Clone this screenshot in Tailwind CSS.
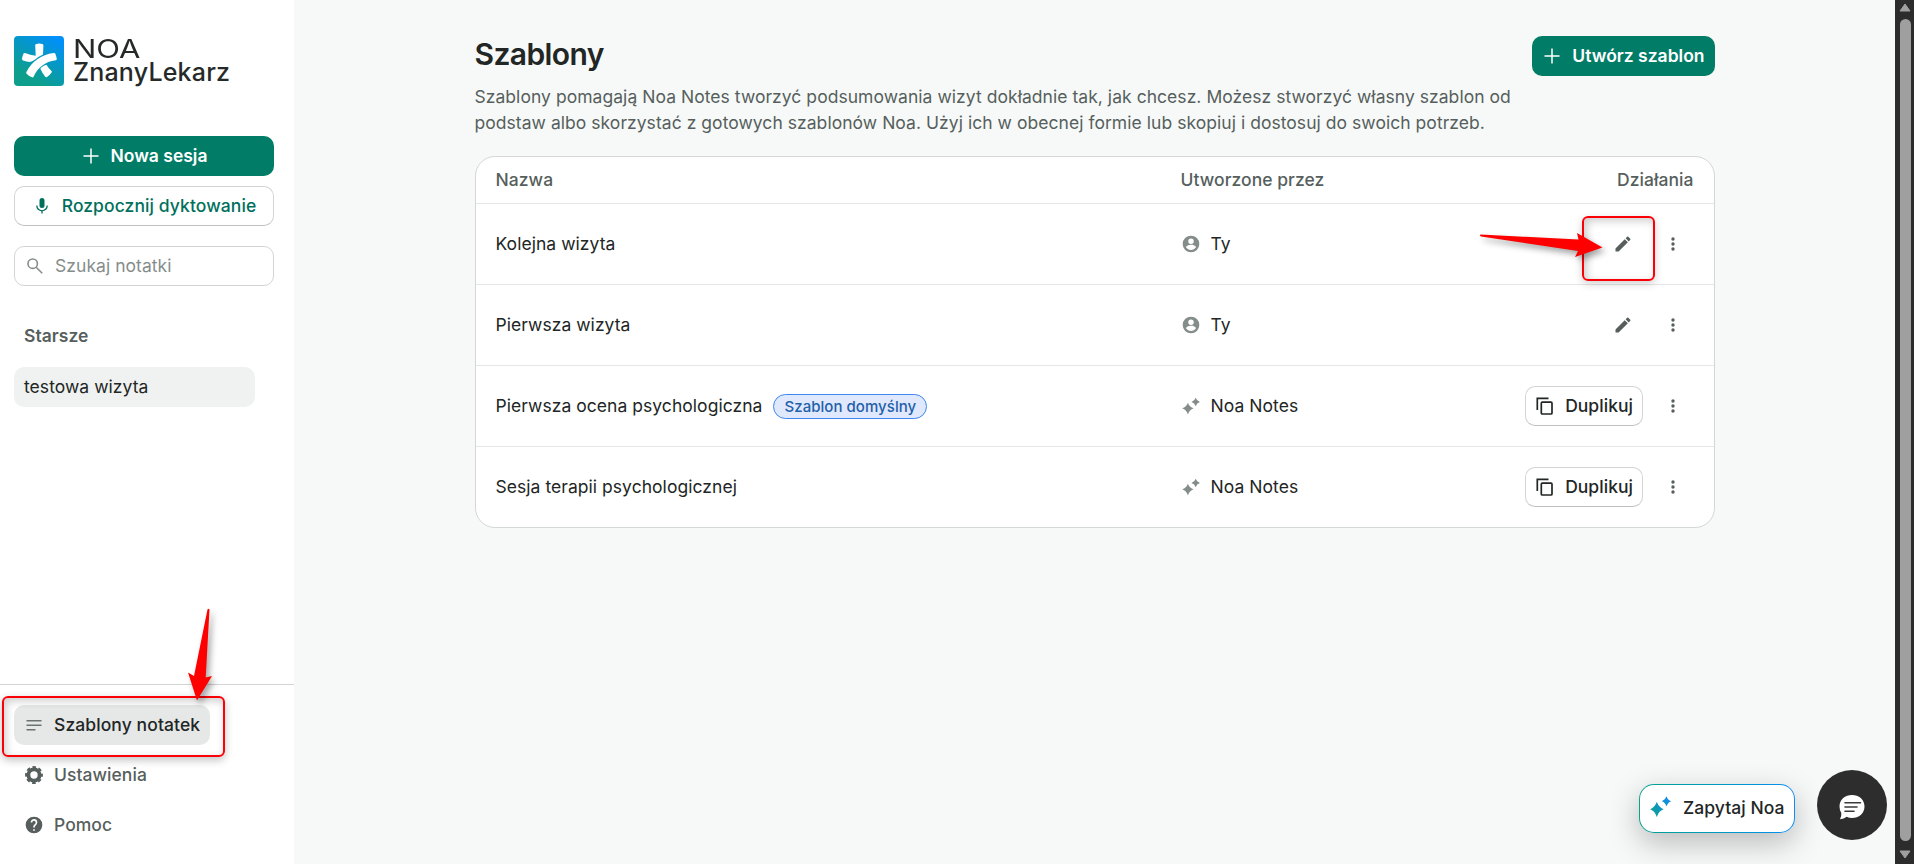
<!DOCTYPE html>
<html lang="pl">
<head>
    <meta charset="UTF-8">
    <title>Noa Notes - Szablony</title>
    <script src="https://cdn.jsdelivr.net/npm/@tailwindcss/browser@4"></script>
    <style>
        body {
            font-family: 'Inter', sans-serif;
        }
    </style>
</head>
<body class="relative flex h-screen overflow-hidden bg-[#f7f9f8] text-[17.5px] leading-[26px] tracking-[0.045px] text-[#222625]">
    <!-- icons -->
    <svg class="hidden">
        <symbol id="plus" viewBox="0 0 20 20"><path d="M10 2.5v15M2.500 10h15" stroke="currentColor" stroke-width="1.5" fill="none"/></symbol>
        <symbol id="user" viewBox="0 0 24 24"><path fill="currentColor" d="M12 2a10 10 0 1 0 0 20 10 10 0 0 0 0-20Zm0 3.4a3.3 3.3 0 1 1 0 6.6 3.3 3.3 0 0 1 0-6.6Zm0 13.8c-2.500 0-4.710-1.280-6-3.220.03-1.990 4-3.080 6-3.080 1.990 0 5.970 1.090 6 3.080-1.290 1.940-3.500 3.220-6 3.220Z"/></symbol>
        <symbol id="stars" viewBox="0 0 20 20"><path fill="currentColor" d="M6.900 6.700Q8.400 10.900 12.600 12.300Q8.400 13.700 6.900 18.400Q5.400 13.700 1.200 12.300Q5.400 10.900 6.900 6.700ZM14.700 1.700Q15.700 4.900 18.900 5.900Q15.700 6.900 14.700 10.200Q13.700 6.900 10.500 5.900Q13.700 4.900 14.700 1.700Z"/></symbol>
        <symbol id="pencil" viewBox="0 0 24 24"><path fill="currentColor" d="M3 17.250V21h3.750L17.810 9.940l-3.750-3.750L3 17.250ZM20.710 7.040a1 1 0 0 0 0-1.410l-2.340-2.340a1 1 0 0 0-1.410 0l-1.830 1.830 3.750 3.750 1.830-1.830Z"/></symbol>
        <symbol id="dots" viewBox="0 0 20 20"><g fill="currentColor"><circle cx="10" cy="5" r="1.700"/><circle cx="10" cy="10" r="1.700"/><circle cx="10" cy="15" r="1.700"/></g></symbol>
        <symbol id="copy" viewBox="0 0 20 20"><g fill="none" stroke="currentColor" stroke-width="1.700"><path d="M2.300 14V2.400H13.500"/><rect x="6.300" y="6.200" width="10.700" height="11.800" rx="1"/></g></symbol>
    </svg>

    <aside class="flex w-[294px] shrink-0 flex-col bg-white">
        <div class="flex h-[136px] items-start gap-[9px] pl-3.5 pt-9">
            <svg class="h-[50px] w-[50px]" viewBox="0 0 50 50">
                <defs><linearGradient id="logo" x1="0.35" y1="0.85" x2="0.85" y2="0.05"><stop offset="0" stop-color="#0d9f8c"/><stop offset="1" stop-color="#0090fa"/></linearGradient></defs>
                <rect width="50" height="50" rx="4" fill="url(#logo)"/>
                <g fill="#fff">
                    <path d="M22.300 7.900q3-.8 6 0q1.100.2 1.100 1.300L29 18.600Q25 20.400 21.500 23.300Q18.500 25.500 16 26Q12.500 25.500 9 24.400Q8 24 8 23Q8.300 20 9.600 17.600Q10 16.600 11.100 17Q16 19.300 21.700 19.800L21.200 9.300Q21.100 8 22.300 7.900Z"/>
                    <path d="M39.800 17Q41 16.700 41.300 17.700Q42.500 20.300 42.800 23Q42.800 24 41.800 24.300C31 25.500 23.500 32 19.600 40.700Q19 41.700 18 41.300Q14.800 40.200 12.600 37.700Q11.900 37 12.400 36C18 25.500 27 18.600 39.800 17Z"/>
                    <path d="M27.300 31.500Q29.700 29.500 32.500 28.800Q34.500 32.500 37.500 35Q38.300 35.700 37.600 36.600Q35.700 39.400 33 41Q32 41.600 31.200 40.800Q28.200 37 26.500 33Q26.300 32.200 27.300 31.500Z"/>
                </g>
            </svg>
            <div class="pt-0.5 text-[#252a29]">
                <div class="h-[22px] w-[54px] origin-left scale-x-[1.24] text-[25px] leading-[22px] tracking-normal">NOA</div>
                <div class="h-6 text-[25px] font-medium leading-6 tracking-[0.2px]">ZnanyLekarz</div>
            </div>
        </div>
        <div class="flex flex-col gap-2.5 pl-3.5 pr-5">
            <button class="flex h-10 items-center justify-center gap-2.5 rounded-[10px] bg-[#007c67] font-semibold tracking-normal text-white"><svg class="size-5"><use href="#plus"/></svg>Nowa sesja</button>
            <button class="flex h-10 items-center justify-center gap-2.5 rounded-[10px] border border-[#d3d5d4] border-b-[#bfc1c0] bg-white font-medium tracking-[0.09px] text-[#00705d]">
                <svg class="size-5" viewBox="0 0 24 24" fill="currentColor"><path d="M12 14.500a3 3 0 0 0 3-3V5.500a3 3 0 0 0-6 0v6a3 3 0 0 0 3 3Zm5.500-3a5.500 5.500 0 0 1-11 0H5a7 7 0 0 0 6.200 6.800V21h1.600v-2.700A7 7 0 0 0 19 11.500Z"/></svg>
                Rozpocznij dyktowanie
            </button>
            <div class="mt-2.5 flex h-10 items-center gap-2.5 rounded-[10px] border border-[#d3d5d4] px-2.5 text-[#858d8b]">
                <svg class="size-5" viewBox="0 0 20 20" fill="none" stroke="currentColor" stroke-width="1.600"><circle cx="7.700" cy="7.700" r="4.700"/><path d="m11.200 11.200 6 6"/></svg>
                Szukaj notatki
            </div>
        </div>
        <div class="mt-[37px] pl-6 font-semibold text-[#565f5d]">Starsze</div>
        <div class="ml-3.5 mt-[18px] flex h-10 w-[241px] items-center rounded-[10px] bg-[#f0f2f1] px-2.5">testowa wizyta</div>
        <nav class="mt-auto flex h-[180px] flex-col items-start gap-2.5 border-t border-[#d3d5d4] pl-3.5 pt-5 font-medium text-[#565f5d]">
            <a class="flex h-10 w-[196px] items-center gap-2.5 whitespace-nowrap rounded-[10px] bg-[#e6e8e7] pl-2.5 tracking-[0.09px] text-[#222625]">
                <svg class="size-5 shrink-0" viewBox="0 0 20 20" stroke="#6b7371" stroke-width="1.600"><path d="M2.500 5.700h15M2.500 10.200h15M2.500 14.700h9"/></svg>
                Szablony notatek
            </a>
            <a class="flex h-10 items-center gap-2.5 px-2.5">
                <svg class="size-5" viewBox="0 0 20 20" fill="none" stroke="currentColor"><circle cx="10" cy="10" r="5.600" stroke-width="3.800"/><circle cx="10" cy="10" r="7.900" stroke-width="2" stroke-dasharray="3.600 2.605" stroke-dashoffset="1.800"/></svg>
                Ustawienia
            </a>
            <a class="flex h-10 items-center gap-2.5 px-2.5">
                <svg class="size-5" viewBox="0 0 24 24" fill="currentColor"><path d="M12 2a10 10 0 1 0 0 20 10 10 0 0 0 0-20Zm1 17h-2v-2h2v2Zm2.070-7.750-.9.920C13.450 12.900 13 13.500 13 15h-2v-.5c0-1.100.45-2.100 1.170-2.830l1.240-1.260A2 2 0 1 0 10 9H8a4 4 0 1 1 7.070 2.250Z"/></svg>
                Pomoc
            </a>
        </nav>
    </aside>

    <main class="flex-1 pl-[180.5px] pt-9">
        <div class="w-[1240px]">
            <div class="flex h-10 items-start justify-between">
                <h1 class="text-[30px] font-semibold leading-[37px] tracking-[-0.6px]">Szablony</h1>
                <button class="flex h-10 items-center gap-2.5 rounded-[10px] bg-[#007c67] px-2.5 font-semibold tracking-normal text-white"><svg class="size-5"><use href="#plus"/></svg>Utwórz szablon</button>
            </div>
            <p class="mt-2 w-[1060px] text-[#565f5d]">Szablony pomagają Noa Notes tworzyć podsumowania wizyt dokładnie tak, jak chcesz. Możesz stworzyć własny szablon od<br>podstaw albo skorzystać z gotowych szablonów Noa. Użyj ich w obecnej formie lub skopiuj i dostosuj do swoich potrzeb.</p>

            <div class="mt-5 rounded-[20px] border border-[#d3d7d5] bg-white">
                <div class="flex h-[47px] items-center border-b border-[#e5e7e6] px-5 font-medium text-[#565f5d]">
                    <div class="w-[685px]">Nazwa</div>
                    <div class="flex-1">Utworzone przez</div>
                    <div>Działania</div>
                </div>
                <div class="flex h-[81px] items-center border-b border-[#e5e7e6] px-5">
                    <div class="w-[685px]">Kolejna wizyta</div>
                    <div class="flex flex-1 items-center gap-2.5"><svg class="size-5 text-[#858d8b]"><use href="#user"/></svg>Ty</div>
                    <div class="flex items-center gap-[30px] pr-[10.5px] text-[#565f5d]"><svg class="size-5"><use href="#pencil"/></svg><svg class="size-5"><use href="#dots"/></svg></div>
                </div>
                <div class="flex h-[81px] items-center border-b border-[#e5e7e6] px-5">
                    <div class="w-[685px]">Pierwsza wizyta</div>
                    <div class="flex flex-1 items-center gap-2.5"><svg class="size-5 text-[#858d8b]"><use href="#user"/></svg>Ty</div>
                    <div class="flex items-center gap-[30px] pr-[10.5px] text-[#565f5d]"><svg class="size-5"><use href="#pencil"/></svg><svg class="size-5"><use href="#dots"/></svg></div>
                </div>
                <div class="flex h-[81px] items-center border-b border-[#e5e7e6] px-5">
                    <div class="flex w-[685px] items-center gap-[11px]">Pierwsza ocena psychologiczna<span class="mt-px flex h-[25px] items-center rounded-full border border-[#3f87ee] bg-[#e0e8fd] px-2.5 text-[15px] font-medium text-[#2260a8]">Szablon domyślny</span></div>
                    <div class="flex flex-1 items-center gap-2.5"><svg class="size-5 text-[#858d8b]"><use href="#stars"/></svg>Noa Notes</div>
                    <div class="flex items-center gap-5 pr-[10.5px] text-[#565f5d]">
                        <button class="flex h-10 items-center gap-2.5 rounded-[10px] border border-[#d3d5d4] border-b-[#bfc1c0] px-[9px] font-medium text-[#222625]"><svg class="size-5"><use href="#copy"/></svg>Duplikuj</button>
                        <svg class="size-5"><use href="#dots"/></svg>
                    </div>
                </div>
                <div class="flex h-20 items-center px-5">
                    <div class="w-[685px]">Sesja terapii psychologicznej</div>
                    <div class="flex flex-1 items-center gap-2.5"><svg class="size-5 text-[#858d8b]"><use href="#stars"/></svg>Noa Notes</div>
                    <div class="flex items-center gap-5 pr-[10.5px] text-[#565f5d]">
                        <button class="flex h-10 items-center gap-2.5 rounded-[10px] border border-[#d3d5d4] border-b-[#bfc1c0] px-[9px] font-medium text-[#222625]"><svg class="size-5"><use href="#copy"/></svg>Duplikuj</button>
                        <svg class="size-5"><use href="#dots"/></svg>
                    </div>
                </div>
            </div>
        </div>
    </main>

    <!-- scrollbar -->
    <div class="flex w-[19px] shrink-0 flex-col items-center justify-between bg-[#2c2c2c] pb-[5px] pl-px pt-[3px]">
        <svg class="h-[9px] w-3" viewBox="0 0 12 9"><path d="M6 1 11 8H1Z" fill="#9f9f9f" stroke="#9f9f9f" stroke-linejoin="round"/></svg>
        <div class="mt-[7px] w-[11px] flex-1 rounded-full bg-[#9f9f9f]"></div>
        <svg class="mt-[9px] h-[9px] w-3" viewBox="0 0 12 9"><path d="M6 8 11 1H1Z" fill="#9f9f9f" stroke="#9f9f9f" stroke-linejoin="round"/></svg>
    </div>

    <!-- floating buttons -->
    <div class="absolute left-[1639px] top-[784px] h-[49px] w-[156px] rounded-[15px] bg-linear-to-r from-[#0da08b] to-[#118cf5] p-px shadow-[0_10px_30px_rgba(0,0,0,0.25)]">
        <button class="flex h-full w-full items-center gap-[9px] rounded-[14px] bg-white pb-px pl-2.5 font-medium">
            <svg class="size-[24px]" viewBox="0 0 24 24"><defs><linearGradient id="spark" x1="0" y1="1" x2="1" y2="0"><stop offset="0" stop-color="#0da08b"/><stop offset="1" stop-color="#118cf5"/></linearGradient></defs><path fill="url(#spark)" d="M6.800 5.800Q8.600 11.400 13.600 13.200Q8.600 15 6.800 21Q5 15 .2 13.200Q5 11.400 6.800 5.800ZM16.500 .2Q17.700 4 21.200 5.200Q17.700 6.400 16.500 10.500Q15.300 6.400 11.900 5.200Q15.300 4 16.500 .2Z"/></svg>
            Zapytaj Noa
        </button>
    </div>
    <div class="absolute left-[1817px] top-[770px] flex size-[70px] items-center justify-center rounded-full bg-[#2d2d2d]">
        <svg class="mt-1 h-[26px] w-[26px]" viewBox="0 0 26 26"><path fill="#fff" d="M13 1C19.800 1 25.500 5.300 25.500 12.500S19.800 24 13 24Q10 24 7.700 22.800Q5 25 1 25.200Q2.700 22.500 2.300 19Q.5 16 .5 12.500C.5 5.300 6.200 1 13 1Z"/><path d="M6 8.700h15.500M6 13h12M6 17.300h9" stroke="#3a3a3a" stroke-width="1.600" stroke-linecap="round"/></svg>
    </div>

    <!-- red callouts -->
    <div class="absolute left-[2px] top-[696px] h-[61px] w-[223px] rounded-[6px] border-2 border-[#fb0007] shadow-[0_3px_8px_rgba(0,0,0,0.25),inset_2px_3px_8px_rgba(0,0,0,0.2)]"></div>
    <div class="absolute left-[1582px] top-[216px] h-[65px] w-[73px] rounded-[6px] border-2 border-[#fb0007] shadow-[0_3px_8px_rgba(0,0,0,0.18),inset_3px_3px_8px_rgba(0,0,0,0.2)]"></div>
    <svg class="absolute left-0 top-0 h-[864px] w-[1895px] drop-shadow-[3px_4px_3px_rgba(0,0,0,0.35)]" fill="#ff0000">
        <path d="M207.500 609.500Q208.500 608 209.500 609.500L205.700 677.500L212 676L197 700.500L188 672.500L194 676Z"/>
        <path d="M1480.500 234.500L1578.500 239.500L1577 233L1602.500 247.500L1575 257L1578 251L1481 236.500Q1479 235.500 1480.500 234.500Z"/>
    </svg>
</body>
</html>
